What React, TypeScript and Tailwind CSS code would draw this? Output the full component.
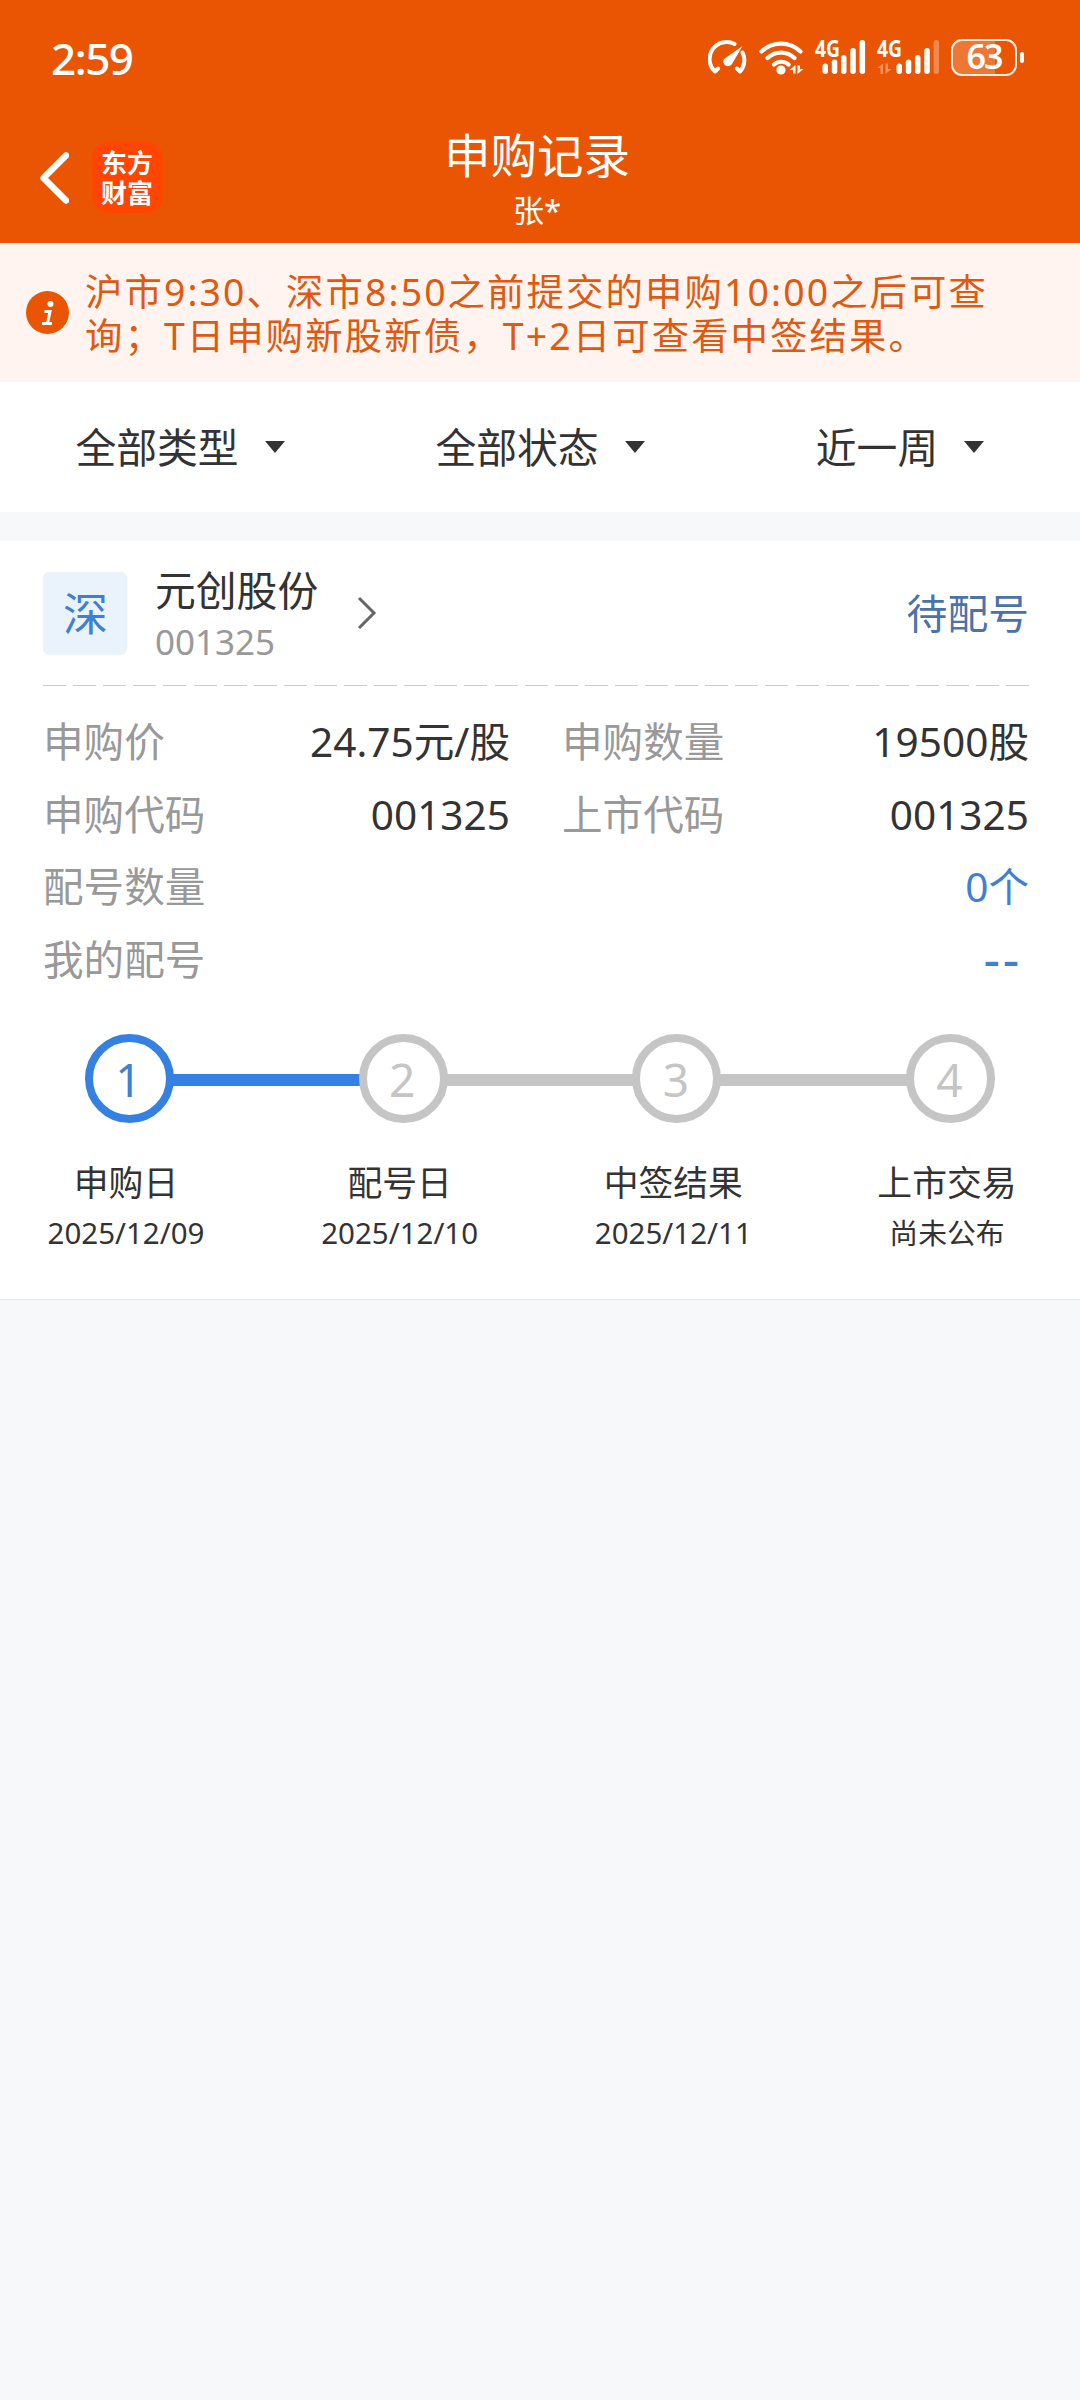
type Step = { no: number; title: string; date: string; active?: boolean };

const filters = ["全部类型", "全部状态", "近一周"];

const steps: Step[] = [
  { no: 1, title: "申购日", date: "2025/12/09", active: true },
  { no: 2, title: "配号日", date: "2025/12/10" },
  { no: 3, title: "中签结果", date: "2025/12/11" },
  { no: 4, title: "上市交易", date: "尚未公布" },
];

export default function App() {
  return (
    <div className="w-[1080px] min-h-[2400px] bg-[#f6f8fa] text-[#333333] font-['Noto_Sans','Noto_Sans_CJK_SC',sans-serif]">
      <header className="h-[243px] bg-[#ea5504] text-white">
        <StatusBar />
        <NavBar />
      </header>
      <Notice />
      <div className="grid grid-cols-3 h-[130px] bg-white">
        {filters.map((name) => (
          <button
            key={name}
            className="flex items-center justify-center gap-[26px] text-[40.8px] leading-[60px]"
          >
            <span>{name}</span>
            <svg width="20" height="12" viewBox="0 0 20 12">
              <path d="M0 0h20L10 12z" fill="#333333" />
            </svg>
          </button>
        ))}
      </div>
      <main className="mt-[29px] h-[759px] bg-white border-b border-[#e8eaec]">
        <StockHeader />
        <Details />
        <Steps />
      </main>
    </div>
  );
}

const StatusBar = () => (
  <div className="flex items-center justify-between h-[114px] pl-[51px] pr-[56px]">
    <p className="text-[44px] leading-[60px] font-medium tracking-[-1.5px] pt-px">2:59</p>
    <div className="flex items-center">
      <svg width="40" height="36" viewBox="0 0 40 36" fill="none">
        <path
          d="M7 32.5A17 17 0 0 1 26.5 5M34.5 13.5A17 17 0 0 1 32 32.5M7 32.5l3-3M32 32.5l-3-3"
          stroke="white"
          strokeWidth="4"
          strokeLinecap="round"
        />
        <path d="M34.5 7L24 25a4.6 4.6 0 0 1-8-5z" fill="white" />
      </svg>
      <svg className="ml-[11px]" width="45" height="36" viewBox="0 0 45 36" fill="none">
        <path
          d="M2.5 12.5a28 28 0 0 1 39 0M8.5 19a19.5 19.5 0 0 1 27 0M15 25.5a11 11 0 0 1 14.5 0"
          stroke="white"
          strokeWidth="4.2"
          strokeLinecap="round"
        />
        <circle cx="22" cy="31" r="4.6" fill="white" />
        <path d="M36.5 26v8.5h-2.5V31h-3.5zM38.5 35v-8.5h2.5V30h3.5z" fill="white" />
      </svg>
      <Signal className="ml-[11px]" />
      <Signal className="ml-[11px]" second />
      <div className="ml-[11px] flex items-center">
        <div className="relative w-[66px] h-[37px] rounded-[11px] border-[2.5px] border-white/90">
          <div className="absolute inset-y-0 left-0 w-[42px] rounded-l-lg bg-white/20" />
          <p className="relative text-center text-[34px] leading-[31px] font-semibold tracking-[-2px]">
            63
          </p>
        </div>
        <div className="ml-[3px] w-1 h-[11px] rounded-full bg-white" />
      </div>
    </div>
  </div>
);

const Signal = ({ className, second }: { className: string; second?: boolean }) => {
  const shift = second ? 12 : 0;
  return (
    <svg
      className={`overflow-visible ${className}`}
      width={second ? 63 : 51}
      height="36"
      viewBox={second ? "0 0 63 36" : "0 0 51 36"}
    >
      <text
        x="0"
        y="18"
        fill="white"
        fontSize="23"
        fontWeight="700"
        textLength="25"
        lengthAdjust="spacingAndGlyphs"
        className="font-['Open_Sans',sans-serif]"
      >
        4G
      </text>
      <g fill="white">
        <rect x={7.5 + shift} y="24.5" width="5.5" height="10.5" rx="2.7" />
        <rect x={16.8 + shift} y="20.5" width="5.5" height="14.5" rx="2.7" />
        <rect x={26 + shift} y="16" width="5.5" height="19" rx="2.7" />
        <rect x={35.3 + shift} y="9" width="5.5" height="26" rx="2.7" />
        <rect x={44.6 + shift} y="1" width="5.5" height="34" rx="2.7" opacity={second ? 0.3 : 1} />
      </g>
      {second && (
        <path
          d="M6 24.5V35H3.5v-6H0zM8.5 35V24.5H11v5.5h3.5z"
          fill="white"
          opacity="0.35"
        />
      )}
    </svg>
  );
};

const NavBar = () => (
  <div className="grid grid-cols-3 items-center h-[129px]">
    <div className="flex items-center gap-[23px] pl-[40px] pb-[2px]">
      <svg width="29" height="52" viewBox="0 0 29 52" fill="none">
        <path
          d="M26 3.5L3.5 26L26 48.5"
          stroke="white"
          strokeWidth="6.5"
          strokeLinecap="round"
          strokeLinejoin="round"
        />
      </svg>
      <div className="flex flex-col items-center justify-center size-[71px] rounded-[17px] bg-[#ff4500] pb-px pr-px text-[26px] leading-[30px] font-bold font-['Noto_Sans_CJK_SC',sans-serif]">
        <span>东方</span>
        <span>财富</span>
      </div>
    </div>
    <div className="pr-[6px] text-center">
      <h1 className="text-[46.5px] leading-[62px]">申购记录</h1>
      <p className="text-[31px] leading-[48px]">张*</p>
    </div>
  </div>
);

const Notice = () => (
  <div className="flex items-center h-[139px] bg-[#fff4ef] pl-[26px]">
    <svg width="43" height="43" viewBox="0 0 43 43">
      <circle cx="21.5" cy="21.5" r="21.5" fill="#ea5504" />
      <circle cx="24.5" cy="13" r="3" fill="white" />
      <path d="M18.5 20.5h5.5l-2.5 12M16 32.5h10" stroke="white" strokeWidth="3" fill="none" />
    </svg>
    <p className="ml-[16px] pt-[3px] text-[37.4px] leading-[44.3px] tracking-[2.1px] text-[#e0590f] whitespace-nowrap">
      沪市9:30、深市8:50之前提交的申购10:00之后可查
      <br />
      询；T日申购新股新债，T+2日可查看中签结果。
    </p>
  </div>
);

const StockHeader = () => (
  <div className="w-[986px] ml-[43px] h-[145px]">
    <div className="flex items-center h-[144px]">
      <div className="flex items-center justify-center w-[84px] h-[83px] rounded-md bg-[#eaf2fb] pl-px text-[45px] leading-none text-[#3f80d0]">
        深
      </div>
      <div className="ml-[28px] pt-[4px]">
        <p className="text-[40.8px] leading-[52px]">元创股份</p>
        <p className="text-[35px] leading-[51px] text-[#999999]">001325</p>
      </div>
      <svg className="ml-[39px]" width="20" height="34" viewBox="0 0 20 34" fill="none">
        <path d="M2 2l15 15L2 32" stroke="#666666" strokeWidth="3" />
      </svg>
      <p className="ml-auto text-[40.8px] leading-[60px] text-[#4a72ab]">待配号</p>
    </div>
    <div className="h-px bg-[repeating-linear-gradient(90deg,#cccccc_0_23px,transparent_23px_30.1px)]" />
  </div>
);

const Details = () => (
  <div className="w-[986px] ml-[43px] pt-[20px] text-[40.6px] leading-[72.7px]">
    <div className="grid grid-cols-[467px_467px] gap-x-[52px]">
      <Row label="申购价" value="24.75元/股" />
      <Row label="申购数量" value="19500股" />
      <Row label="申购代码" value="001325" />
      <Row label="上市代码" value="001325" />
    </div>
    <Row label="配号数量" value="0个" blue />
    <div className="flex justify-between">
      <span className="text-[#999999]">我的配号</span>
      <span className="pr-[7px] -mt-[2px] text-[52px] tracking-[2.5px] text-[#3f80d0]">--</span>
    </div>
  </div>
);

const Row = ({ label, value, blue }: { label: string; value: string; blue?: boolean }) => (
  <div className="flex justify-between">
    <span className="text-[#999999]">{label}</span>
    <span className={blue ? "text-[#3f80d0]" : ""}>{value}</span>
  </div>
);

const Steps = () => (
  <div className="pt-[37px]">
    <div className="flex items-center px-[85px]">
      {steps.map((step) => (
        <StepNode key={step.no} step={step} />
      ))}
    </div>
    <div className="flex justify-between mt-[34px] pl-[36px] pr-[43px]">
      {steps.map((step) => (
        <div key={step.no} className="w-[180px] text-center">
          <p className="text-[34.8px] leading-[52px]">{step.title}</p>
          <p
            className={
              step.no === 4 ? "text-[28.8px] leading-[48px]" : "text-[29.5px] leading-[48px]"
            }
          >
            {step.date}
          </p>
        </div>
      ))}
    </div>
  </div>
);

const StepNode = ({ step }: { step: Step }) => (
  <>
    <div
      className={`flex shrink-0 items-center justify-center size-[89px] rounded-full border-8 pt-[2px] pr-[2px] text-[46px] leading-none ${
        step.active ? "border-[#3581e2] text-[#3f80d0]" : "border-[#c5c5c5] text-[#c5c5c5]"
      }`}
    >
      {step.no}
    </div>
    {step.no < steps.length && (
      <div
        className={`mt-[3px] -mx-px h-3 flex-1 ${step.active ? "bg-[#3581e2]" : "bg-[#c5c5c5]"}`}
      />
    )}
  </>
);
